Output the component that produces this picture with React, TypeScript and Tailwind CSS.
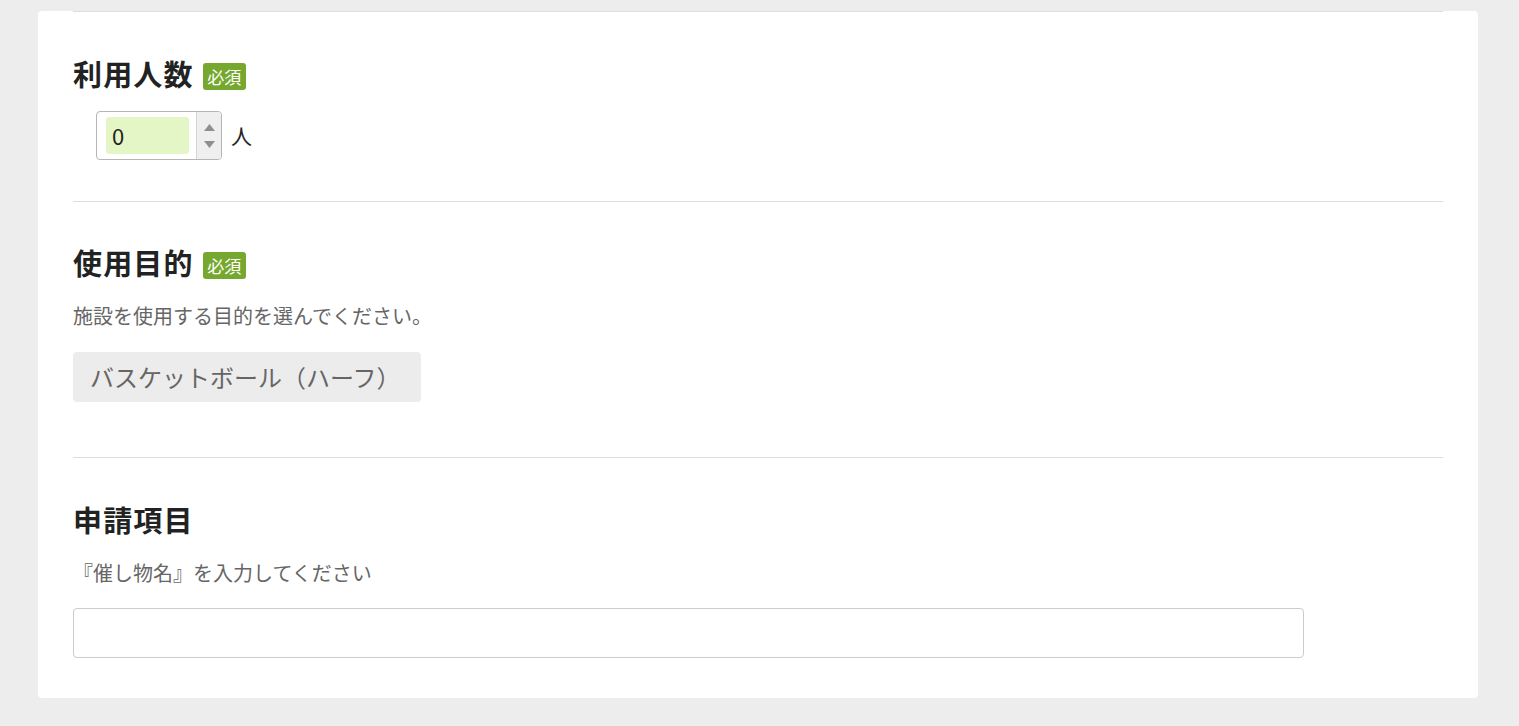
import React from "react";

const font = { fontFamily: '"Noto Sans CJK JP", "Noto Sans", sans-serif' };

function Badge() {
  return (
    <span className="ml-[9px] mt-[7px] inline-flex h-[27px] w-[43px] items-center justify-center rounded-[3px] bg-[#76a82f] text-[17px] leading-none text-white">
      必須
    </span>
  );
}

export default function App() {
  return (
    <div className="min-h-screen bg-[#ededed] pt-[11px]" style={font}>
      <div className="ml-[38px] w-[1440px] rounded-[4px] bg-white px-[35px]">
        <section className="border-t border-[#dddddd] pt-[41px] pb-[41px]">
          <div className="flex items-center">
            <h2 className="text-[29px] font-bold leading-[40px] tracking-[0.04em] text-[#222]">利用人数</h2>
            <Badge />
          </div>
          <div className="mt-[18px] ml-[23px] flex items-center">
            <div className="flex h-[49px] w-[126px] items-stretch overflow-hidden rounded-[4px] border border-[#b5b5b5]">
              <div className="flex flex-1 items-center py-[5px] pl-[9px] pr-[7px]">
                <div className="flex h-[37px] w-full items-center rounded-[3px] bg-[#e4f5c6] pl-[6px] text-[22px] text-[#222]">0</div>
              </div>
              <div className="flex w-[25px] flex-col items-center justify-center gap-[10px] border-l border-[#d6d6d6] bg-[#efefef]">
                <svg width="11" height="7" viewBox="0 0 11 7"><polygon points="5.5,0 11,7 0,7" fill="#8f8f8f" /></svg>
                <svg width="11" height="7" viewBox="0 0 11 7"><polygon points="0,0 11,0 5.5,7" fill="#8f8f8f" /></svg>
              </div>
            </div>
            <span className="ml-[9px] text-[21px] text-[#222]">人</span>
          </div>
        </section>

        <section className="border-t border-[#dddddd] pt-[40px] pb-[55px]">
          <div className="flex items-center">
            <h2 className="text-[29px] font-bold leading-[40px] tracking-[0.04em] text-[#222]">使用目的</h2>
            <Badge />
          </div>
          <p className="mt-[19px] text-[20px] leading-[30px] text-[#666]">施設を使用する目的を選んでください。</p>
          <div className="mt-[21px] flex h-[50px] w-[348px] items-center rounded-[4px] bg-[#ececec] pl-[17px] text-[24px] text-[#666]">
            バスケットボール（ハーフ）
          </div>
        </section>

        <section className="border-t border-[#dddddd] pt-[41px] pb-[40px]">
          <h2 className="text-[29px] font-bold leading-[40px] tracking-[0.04em] text-[#222]">申請項目</h2>
          <p className="mt-[19px] text-[20px] leading-[30px] text-[#666]">『催し物名』を入力してください</p>
          <input
            type="text"
            className="mt-[20px] block h-[50px] w-[1231px] rounded-[4px] border border-[#cccccc] bg-white px-3 outline-none"
          />
        </section>
      </div>
    </div>
  );
}
